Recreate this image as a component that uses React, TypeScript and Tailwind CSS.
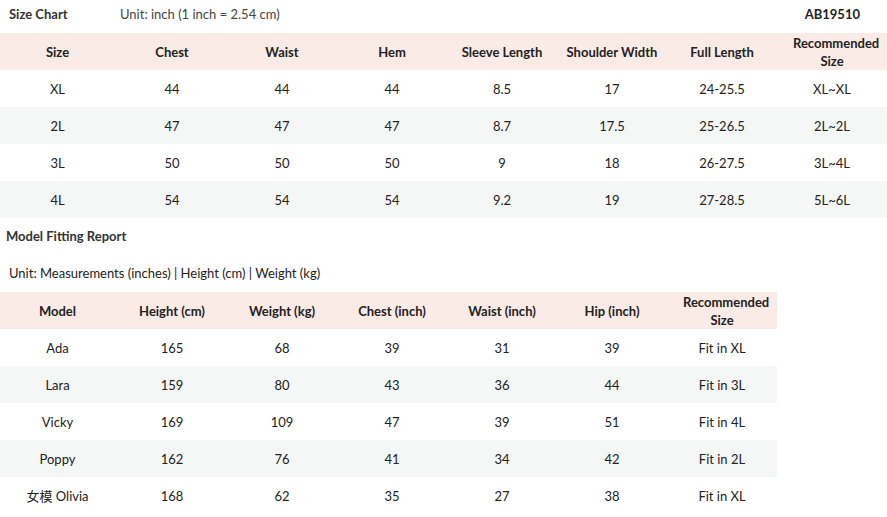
const sizeHead = ['Size', 'Chest', 'Waist', 'Hem', 'Sleeve Length', 'Shoulder Width', 'Full Length', 'Recommended Size']
const sizeRows = [
  ['XL', '44', '44', '44', '8.5', '17', '24-25.5', 'XL~XL'],
  ['2L', '47', '47', '47', '8.7', '17.5', '25-26.5', '2L~2L'],
  ['3L', '50', '50', '50', '9', '18', '26-27.5', '3L~4L'],
  ['4L', '54', '54', '54', '9.2', '19', '27-28.5', '5L~6L'],
]

const modelHead = ['Model', 'Height (cm)', 'Weight (kg)', 'Chest (inch)', 'Waist (inch)', 'Hip (inch)', 'Recommended Size']
const modelRows = [
  ['Ada', '165', '68', '39', '31', '39', 'Fit in XL'],
  ['Lara', '159', '80', '43', '36', '44', 'Fit in 3L'],
  ['Vicky', '169', '109', '47', '39', '51', 'Fit in 4L'],
  ['Poppy', '162', '76', '41', '34', '42', 'Fit in 2L'],
  ['女模 Olivia', '168', '62', '35', '27', '38', 'Fit in XL'],
]

function Row({ cells, head, shade }: { cells: string[]; head?: boolean; shade?: boolean }) {
  return (
    <div
      className={`flex h-[37px] items-center ${head ? 'bg-[#fbebe6] font-bold' : shade ? 'bg-[#f5f7f6]' : 'bg-white'}`}
    >
      {cells.map((c, i) => (
        <div
          key={i}
          className={`${i === 0 ? 'w-[115px]' : 'w-[110px]'} shrink-0 text-center leading-[18px] ${
            head && c === 'Recommended Size' ? 'px-4' : ''
          } ${i === 1 ? 'ml-[2px]' : ''}`}
        >
          {c}
        </div>
      ))}
    </div>
  )
}

export default function App() {
  return (
    <div
      className="w-[887px] h-[517px] bg-white text-[13px] text-[#222]"
      style={{ fontFamily: 'Lato, "Noto Sans CJK SC", sans-serif' }}
    >
      <div className="flex items-center h-[33px] pb-1">
        <span className="font-bold text-[#333] pl-[9px] w-[120px]">Size Chart</span>
        <span className="text-[#444]">Unit: inch (1 inch = 2.54 cm)</span>
        <span className="ml-auto mr-[27px] font-bold">AB19510</span>
      </div>

      <div className="w-[887px]">
        <Row cells={sizeHead} head />
        {sizeRows.map((r, i) => (
          <Row key={i} cells={r} shade={i % 2 === 1} />
        ))}
      </div>

      <div className="h-[38px] flex items-center pl-[6px] font-bold text-[#333]">Model Fitting Report</div>
      <div className="h-[36px] flex items-center pl-[9px] text-[#222]">
        Unit: Measurements (inches) | Height (cm) | Weight (kg)
      </div>

      <div className="w-[777px]">
        <Row cells={modelHead} head />
        {modelRows.map((r, i) => (
          <Row key={i} cells={r} shade={i % 2 === 1} />
        ))}
      </div>
    </div>
  )
}
